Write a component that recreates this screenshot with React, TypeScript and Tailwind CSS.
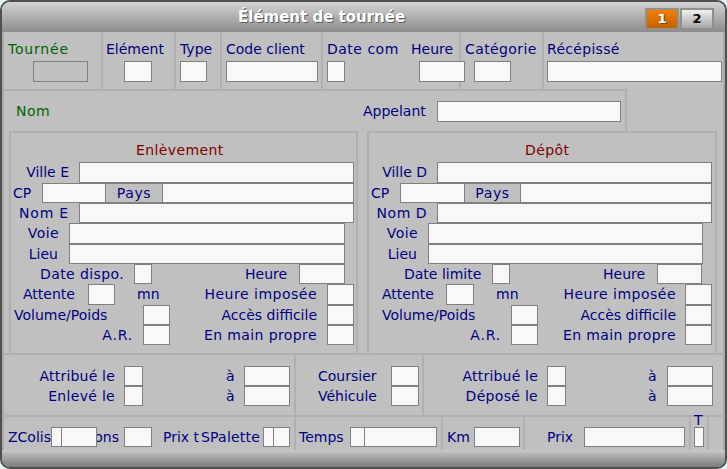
import React from "react";

const inputBase = "block shrink-0 h-full box-border border border-[#808080] bg-[#f8f8f8] outline-none relative z-10";

function F({ className = "" }: { className?: string }) {
  return <input readOnly tabIndex={-1} className={`${inputBase} ${className}`} />;
}

function L({ children, className = "" }: { children: React.ReactNode; className?: string }) {
  return <span className={`block shrink-0 whitespace-nowrap leading-[20px] text-[#000080] ${className}`}>{children}</span>;
}

function Row({ children, className = "" }: { children: React.ReactNode; className?: string }) {
  return <div className={`flex ${className}`}>{children}</div>;
}

const sep = "border-r-2 border-[#b0b0b0]";

export default function App() {
  return (
    <div className="w-[727px] h-[469px] bg-[#e4f2f2] font-['DejaVu_Sans',sans-serif] text-[14px]">
      <div className="w-full h-full box-border rounded-[10px] border-2 border-[#505050] bg-[#c0c0c0] overflow-hidden flex flex-col">
        {/* title */}
        <div className="relative h-[30px] shrink-0 bg-gradient-to-b from-[#d4d4d4] to-[#8c8c8c] flex items-center">
          <div className="ml-[236px] font-bold text-white text-[15px] [text-shadow:1px_1px_0_#606060]">Élément de tournée</div>
          <div className="ml-auto mr-[11px] flex gap-[1px] mt-[4px]">
            <div className="w-[34px] h-[22px] box-border border-2 border-[#909090] bg-gradient-to-b from-[#f08000] to-[#c86000] flex items-center justify-center text-[13px] font-bold text-white [text-shadow:1px_1px_0_#505050]">1</div>
            <div className="w-[34px] h-[22px] box-border border-2 border-[#909090] bg-gradient-to-b from-[#f0f0f0] to-[#a8a8a8] flex items-center justify-center text-[13px] font-bold text-black">2</div>
          </div>
        </div>

        <div className="flex-1 flex flex-col shadow-[inset_2px_0_0_#a8a8a8,inset_-2px_0_0_#a8a8a8]">
          {/* band 1 */}
          <div className="h-[57px] shrink-0 flex">
            <div className={`w-[101px] shrink-0 box-border pt-[7px] ${sep}`}>
              <L className="ml-[6px] h-[18px] tracking-[0.8px] !text-[#006400]">Tournée</L>
              <Row className="h-[21px] mt-[4px]"><F className="ml-[31px] w-[55px] !bg-[#c0c0c0]" /></Row>
            </div>
            <div className={`w-[73px] shrink-0 box-border pt-[7px] ${sep}`}>
              <L className="ml-[3px] h-[18px]">Elément</L>
              <Row className="h-[21px] mt-[4px]"><F className="ml-[21px] w-[28px]" /></Row>
            </div>
            <div className={`w-[46px] shrink-0 box-border pt-[7px] ${sep}`}>
              <L className="ml-[4px] h-[18px]">Type</L>
              <Row className="h-[21px] mt-[4px]"><F className="ml-[4px] w-[27px]" /></Row>
            </div>
            <div className={`w-[101px] shrink-0 box-border pt-[7px] ${sep}`}>
              <L className="ml-[4px] h-[18px]">Code client</L>
              <Row className="h-[21px] mt-[4px]"><F className="ml-[4px] w-[92px]" /></Row>
            </div>
            <div className={`w-[138px] shrink-0 box-border pt-[7px] ${sep}`}>
              <Row className="h-[18px]">
                <L className="ml-[4px] w-[84px] tracking-[0.5px]">Date com</L>
                <L>Heure</L>
              </Row>
              <Row className="h-[21px] mt-[4px]">
                <F className="ml-[4px] w-[18px]" />
                <F className="ml-[74px] w-[46px]" />
              </Row>
            </div>
            <div className={`w-[83px] shrink-0 box-border pt-[7px] ${sep}`}>
              <L className="ml-[4px] h-[18px] tracking-[0.4px]">Catégorie</L>
              <Row className="h-[21px] mt-[4px]"><F className="ml-[13px] w-[37px]" /></Row>
            </div>
            <div className="flex-1 pt-[7px]">
              <L className="ml-[3px] h-[18px] tracking-[0.3px]">Récépissé</L>
              <Row className="h-[21px] mt-[4px]"><F className="ml-[3px] w-[175px]" /></Row>
            </div>
          </div>

          {/* band 2 */}
          <div className="h-[42px] shrink-0 w-[625px] box-border border-t-2 border-r-2 border-[#b0b0b0] pt-[10px]">
            <Row className="h-[21px]">
              <L className="ml-[14px] w-[347px] tracking-[0.5px] !text-[#006400]">Nom</L>
              <L className="w-[74px]">Appelant</L>
              <F className="w-[184px]" />
            </Row>
          </div>

          {/* groups */}
          <div className="h-[222px] shrink-0 flex">
            <div className="ml-[7px] w-[349px] box-border border-t-2 border-x-2 border-[#b0b0b0]">
              <div className="h-[29px] pt-[7px]"><L className="ml-[125px] tracking-[0.4px] !text-[#800000]">Enlèvement</L></div>
              <Row className="h-[21px]"><L className="w-[58px] text-right">Ville E</L><F className="ml-[10px] w-[275px]" /></Row>
              <Row className="h-[20px]">
                <L className="ml-[2px] w-[29px]">CP</L>
                <F className="w-[64px]" />
                <div className="w-[56px] shrink-0 box-border border-y border-[#808080] text-center leading-[18px] tracking-[0.6px] text-[#000080]">Pays</div>
                <F className="w-[192px]" />
              </Row>
              <Row className="h-[20px]"><L className="w-[58px] text-right tracking-[0.8px]">Nom E</L><F className="ml-[10px] w-[275px]" /></Row>
              <Row className="h-[21px]"><L className="w-[48px] text-right tracking-[0.4px]">Voie</L><F className="ml-[10px] w-[276px]" /></Row>
              <Row className="h-[20px]"><L className="w-[47px] text-right">Lieu</L><F className="ml-[11px] w-[276px]" /></Row>
              <Row className="h-[20px]">
                <L className="ml-[29px] w-[84px] tracking-[0.4px]">Date dispo.</L>
                <F className="ml-[10px] w-[18px]" />
                <L className="ml-[93px] w-[44px]">Heure</L>
                <F className="ml-[10px] w-[46px]" />
              </Row>
              <Row className="h-[21px]">
                <L className="ml-[12px] w-[55px]">Attente</L>
                <F className="ml-[10px] w-[27px]" />
                <L className="ml-[22px] w-[23px]">mn</L>
                <L className="ml-[40px] w-[117px] text-right tracking-[0.5px]">Heure imposée</L>
                <F className="ml-[10px] w-[27px]" />
              </Row>
              <Row className="h-[20px]">
                <L className="ml-[3px] w-[102px]">Volume/Poids</L>
                <F className="ml-[27px] w-[27px]" />
                <L className="ml-[30px] w-[117px] text-right">Accès difficile</L>
                <F className="ml-[10px] w-[27px]" />
              </Row>
              <Row className="h-[20px]">
                <L className="w-[122px] text-right tracking-[0.8px]">A.R.</L>
                <F className="ml-[10px] w-[27px]" />
                <L className="ml-[30px] w-[117px] text-right tracking-[0.4px]">En main propre</L>
                <F className="ml-[10px] w-[27px]" />
              </Row>
            </div>

            <div className="ml-[9px] w-[350px] box-border border-t-2 border-x-2 border-[#b0b0b0]">
              <div className="h-[29px] pt-[7px]"><L className="ml-[156px] tracking-[0.4px] !text-[#800000]">Dépôt</L></div>
              <Row className="h-[21px]"><L className="w-[58px] text-right">Ville D</L><F className="ml-[10px] w-[275px]" /></Row>
              <Row className="h-[20px]">
                <L className="ml-[2px] w-[29px]">CP</L>
                <F className="w-[65px]" />
                <div className="w-[55px] shrink-0 box-border border-y border-[#808080] text-center leading-[18px] tracking-[0.6px] text-[#000080]">Pays</div>
                <F className="w-[192px]" />
              </Row>
              <Row className="h-[20px]"><L className="w-[58px] text-right tracking-[0.5px]">Nom D</L><F className="ml-[10px] w-[275px]" /></Row>
              <Row className="h-[21px]"><L className="w-[49px] text-right tracking-[0.4px]">Voie</L><F className="ml-[10px] w-[275px]" /></Row>
              <Row className="h-[20px]"><L className="w-[48px] text-right">Lieu</L><F className="ml-[11px] w-[275px]" /></Row>
              <Row className="h-[20px]">
                <L className="ml-[35px] w-[79px]">Date limite</L>
                <F className="ml-[9px] w-[18px]" />
                <L className="ml-[93px] w-[44px]">Heure</L>
                <F className="ml-[10px] w-[45px]" />
              </Row>
              <Row className="h-[21px]">
                <L className="ml-[13px] w-[55px]">Attente</L>
                <F className="ml-[9px] w-[28px]" />
                <L className="ml-[22px] w-[23px]">mn</L>
                <L className="ml-[40px] w-[117px] text-right tracking-[0.5px]">Heure imposée</L>
                <F className="ml-[9px] w-[27px]" />
              </Row>
              <Row className="h-[20px]">
                <L className="ml-[13px] w-[102px]">Volume/Poids</L>
                <F className="ml-[27px] w-[27px]" />
                <L className="ml-[21px] w-[117px] text-right">Accès difficile</L>
                <F className="ml-[9px] w-[27px]" />
              </Row>
              <Row className="h-[20px]">
                <L className="w-[132px] text-right tracking-[0.8px]">A.R.</L>
                <F className="ml-[10px] w-[27px]" />
                <L className="ml-[21px] w-[117px] text-right tracking-[0.4px]">En main propre</L>
                <F className="ml-[9px] w-[27px]" />
              </Row>
            </div>
          </div>

          {/* band 3 */}
          <div className="h-[62px] shrink-0 box-border border-t-2 border-[#b0b0b0] flex">
            <div className={`w-[294px] shrink-0 box-border pt-[11px] ${sep}`}>
              <Row className="h-[20px]"><L className="w-[113px] text-right tracking-[0.2px]">Attribué le</L><F className="ml-[9px] w-[19px]" /><L className="ml-[83px] w-[8px]">à</L><F className="ml-[10px] w-[46px]" /></Row>
              <Row className="h-[20px]"><L className="w-[113px] text-right tracking-[0.3px]">Enlevé le</L><F className="ml-[9px] w-[19px]" /><L className="ml-[83px] w-[8px]">à</L><F className="ml-[10px] w-[46px]" /></Row>
            </div>
            <div className={`w-[128px] shrink-0 box-border pt-[11px] ${sep}`}>
              <Row className="h-[20px]"><L className="ml-[22px] w-[62px]">Coursier</L><F className="ml-[11px] w-[28px]" /></Row>
              <Row className="h-[20px]"><L className="ml-[22px] w-[62px]">Véhicule</L><F className="ml-[11px] w-[28px]" /></Row>
            </div>
            <div className="flex-1 pt-[11px]">
              <Row className="h-[20px]"><L className="w-[114px] text-right tracking-[0.2px]">Attribué le</L><F className="ml-[9px] w-[19px]" /><L className="ml-[82px] w-[8px]">à</L><F className="ml-[11px] w-[46px]" /></Row>
              <Row className="h-[20px]"><L className="w-[114px] text-right tracking-[0.3px]">Déposé le</L><F className="ml-[9px] w-[19px]" /><L className="ml-[82px] w-[8px]">à</L><F className="ml-[11px] w-[46px]" /></Row>
            </div>
          </div>

          {/* band 4 */}
          <div className="h-[35px] shrink-0 box-border border-t-2 border-[#b0b0b0] flex">
            <div className={`w-[294px] shrink-0 box-border pt-[10px] ${sep}`}>
              <Row className="h-[20px]">
                <L className="ml-[6px] w-[43px]">ZColis</L>
                <F className="w-[11px]" />
                <F className="ml-[-1px] w-[36px]" />
                <L className="ml-[-38px] w-[60px] text-right">Cartons</L>
                <F className="ml-[5px] w-[28px]" />
                <L className="ml-[11px] w-[39px]">Prix t</L>
                <L className="ml-[-1px] w-[62px] tracking-[0.2px]">SPalette</L>
                <F className="w-[11px]" />
                <F className="ml-[-1px] w-[17px]" />
              </Row>
            </div>
            <div className={`w-[147px] shrink-0 box-border pt-[10px] ${sep}`}>
              <Row className="h-[20px]">
                <L className="ml-[3px] w-[51px]">Temps</L>
                <F className="w-[15px]" />
                <F className="ml-[-1px] w-[73px]" />
              </Row>
            </div>
            <div className={`w-[82px] shrink-0 box-border pt-[10px] ${sep}`}>
              <Row className="h-[20px]"><L className="ml-[4px] w-[27px]">Km</L><F className="w-[46px]" /></Row>
            </div>
            <div className={`w-[166px] shrink-0 box-border pt-[10px] ${sep}`}>
              <Row className="h-[20px]"><L className="ml-[22px] w-[37px]">Prix</L><F className="w-[101px]" /></Row>
            </div>
            <div className={`w-[18px] shrink-0 box-border pt-[10px] ${sep}`}>
              <L className="ml-[3px] h-0 relative top-[-17px] z-20">T</L>
              <Row className="h-[20px]"><F className="ml-[3px] w-[10px]" /></Row>
            </div>
          </div>
        </div>

        {/* footer */}
        <div className="h-[17px] shrink-0 bg-gradient-to-b from-[#c8c8c8] to-[#7c7c7c]" />
      </div>
    </div>
  );
}
